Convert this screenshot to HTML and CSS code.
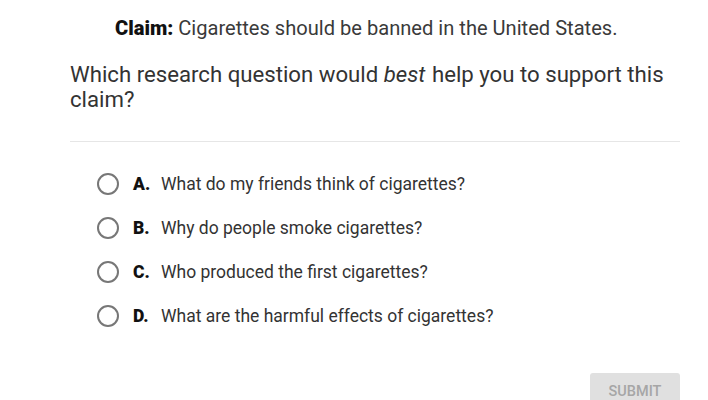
FILE: index.html
```html
<!DOCTYPE html>
<html>
<head>
<meta charset="utf-8">
<link rel="stylesheet" href="styles.css">
</head>
<body>
<div class="page">
  <p class="claim"><b>Claim:</b> Cigarettes should be banned in the United States.</p>
  <p class="question">Which research question would <i>best</i> help you to support this claim?</p>
  <hr class="divider">
  <div class="options">
    <div class="option"><span class="radio"></span><span class="letter">A.</span><span class="text">What do my friends think of cigarettes?</span></div>
    <div class="option"><span class="radio"></span><span class="letter">B.</span><span class="text">Why do people smoke cigarettes?</span></div>
    <div class="option"><span class="radio"></span><span class="letter">C.</span><span class="text">Who produced the first cigarettes?</span></div>
    <div class="option"><span class="radio"></span><span class="letter">D.</span><span class="text">What are the harmful effects of cigarettes?</span></div>
  </div>
  <div class="actions"><button class="submit">SUBMIT</button></div>
</div>
</body>
</html>
```
FILE: styles.css
```css
html, body { margin: 0; padding: 0; background: #fff; }
body { font-family: Roboto, "Liberation Sans", sans-serif; color: #333; }
.page { width: 610px; margin-left: 70px; padding-top: 16px; }
.claim { margin: 0 0 0 45px; font-size: 20.1px; line-height: 25px; color: #3a3a3a; }
.claim b { font-weight: 900; color: #111; }
.question { margin: 21px 0 0 0; font-size: 22.2px; line-height: 25px; color: #333; }
.question i { padding-right: 1px; }
.divider { border: 0; border-top: 1px solid #e6e6e6; margin: 29px 0 0 0; height: 0; }
.options { padding-left: 27px; padding-top: 31px; display: flex; flex-direction: column; gap: 22px; }
.option { display: flex; align-items: center; height: 22px; font-size: 17.5px; }
.radio { width: 18px; height: 18px; border: 2px solid #777; border-radius: 50%; box-sizing: content-box; flex: none; }
.letter { font-weight: 900; color: #111; margin-left: 14px; width: 28px; }
.text { color: #333; }
.actions { display: flex; justify-content: flex-end; padding-top: 46px; }
.submit { font-family: Roboto, "Liberation Sans", sans-serif; width: 90px; height: 36px; background: #e0e0e0; color: #a6a6a6; border: 0; border-radius: 3px; font-size: 14.5px; font-weight: 500; }
```
